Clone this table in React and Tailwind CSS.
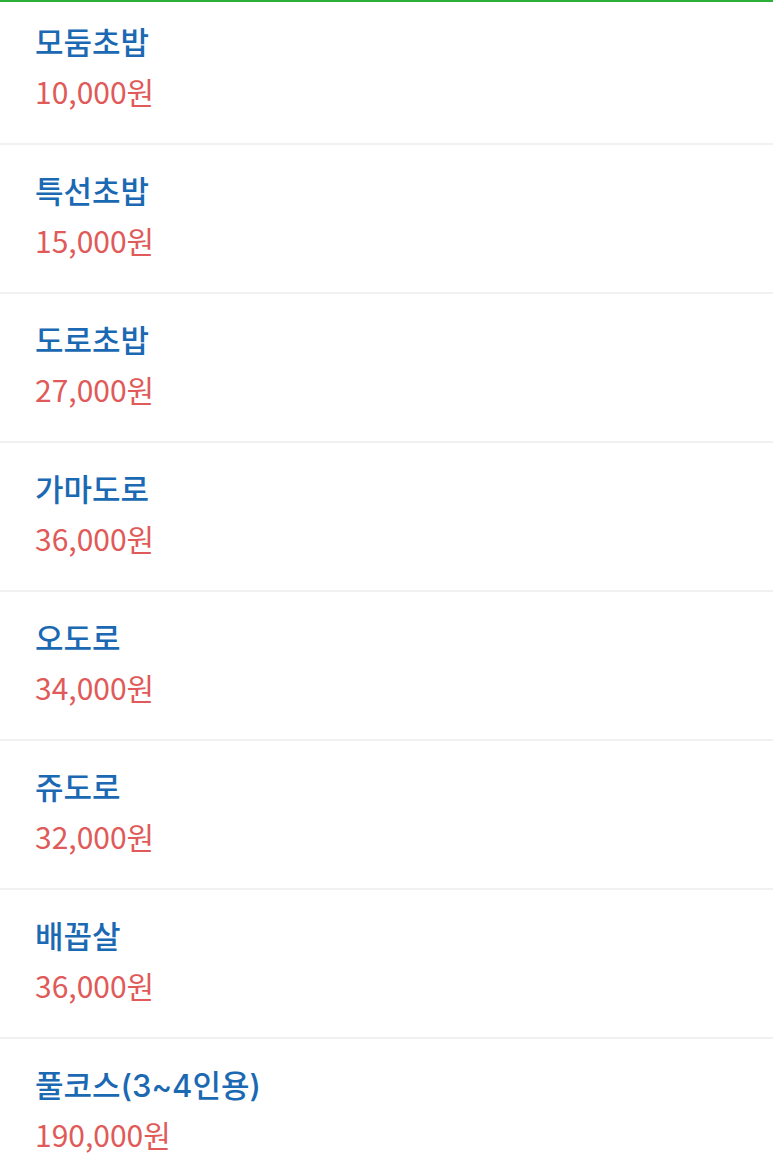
import React from 'react';

const menu = [
  { name: '모둠초밥', price: '10,000원' },
  { name: '특선초밥', price: '15,000원' },
  { name: '도로초밥', price: '27,000원' },
  { name: '가마도로', price: '36,000원' },
  { name: '오도로', price: '34,000원' },
  { name: '쥬도로', price: '32,000원' },
  { name: '배꼽살', price: '36,000원' },
  { name: '풀코스(3~4인용)', price: '190,000원' },
];

const App = () => {
  return (
    <div
      className="min-h-[1164px] w-[773px] bg-white border-t-2 border-[#2bb03a] overflow-hidden"
      style={{ fontFamily: '"Noto Sans CJK KR", "Noto Sans", sans-serif' }}
    >
      {menu.map((item, i) => (
        <div
          key={item.name}
          className={`px-[35px] pb-[28px] border-b-2 border-[#f1f1f1] ${i === 0 ? 'pt-[17px]' : 'pt-[23px]'}`}
        >
          <div className="text-[31px] leading-[48px] font-medium text-[#1b69b3] font-['Inter','Noto_Sans_CJK_KR',sans-serif]">
            {item.name}
          </div>
          <div className="text-[30px] leading-[48px] text-[#e05a59]">{item.price}</div>
        </div>
      ))}
    </div>
  );
};

export default App;
